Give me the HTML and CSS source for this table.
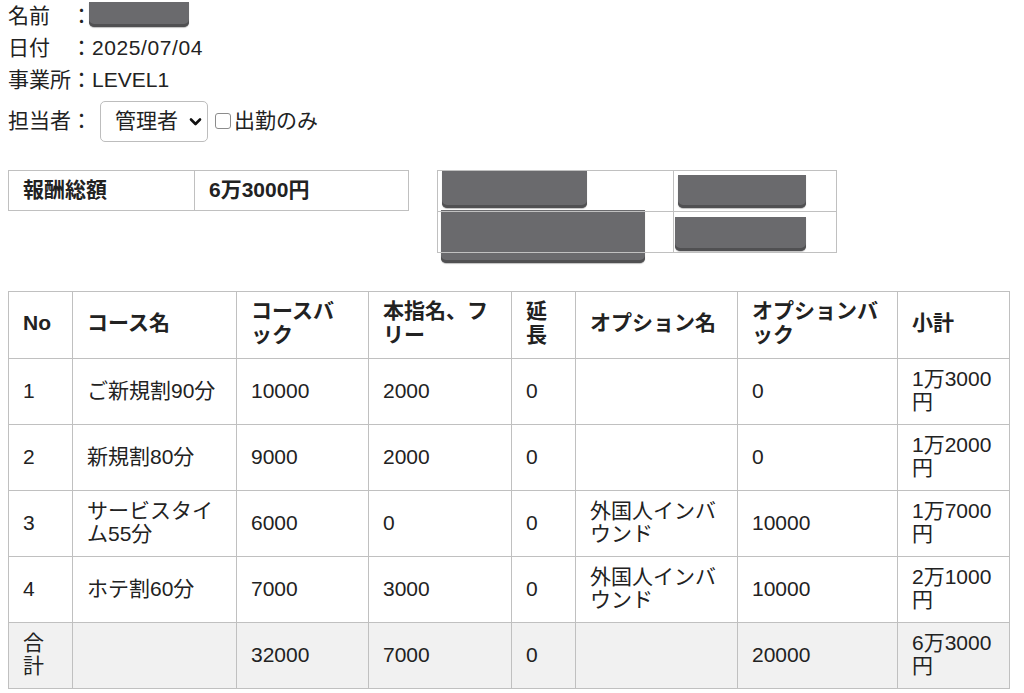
FILE: index.html
```html
<!DOCTYPE html>
<html lang="ja">
<head>
<meta charset="utf-8">
<title>報酬</title>
<link rel="stylesheet" href="styles.css">
</head>
<body>
<div class="info">
  <div class="line">名前　：<span class="redact redact-name"></span></div>
  <div class="line">日付　：<span class="num">2025/07/04</span></div>
  <div class="line">事業所：LEVEL1</div>
  <div class="line filter">
    <span>担当者：</span>
    <span class="select-wrap">
      <select class="select"><option>管理者</option></select>
      <svg class="chev" width="13" height="10" viewBox="0 0 13 10"><path d="M2 2.5 L6.5 7 L11 2.5" fill="none" stroke="#111" stroke-width="2.6" stroke-linecap="round" stroke-linejoin="round"/></svg>
    </span>
    <label class="check"><input type="checkbox" class="cb"><span>出勤のみ</span></label>
  </div>
</div>

<div class="summary-row">
  <table class="summary">
    <colgroup><col class="s1"><col class="s2"></colgroup>
    <tr><th>報酬総額</th><th>6万3000円</th></tr>
  </table>
  <table class="hidden-table">
    <colgroup><col class="h1"><col class="h2"></colgroup>
    <tr>
      <td><div class="redact r1"></div></td>
      <td><div class="redact r2"></div></td>
    </tr>
    <tr>
      <td><div class="redact r3"></div></td>
      <td><div class="redact r4"></div></td>
    </tr>
  </table>
</div>

<table class="main">
  <colgroup>
    <col class="c-no"><col class="c-course"><col class="c-back"><col class="c-shimei"><col class="c-ext"><col class="c-opt"><col class="c-optback"><col class="c-sub">
  </colgroup>
  <thead>
    <tr><th>No</th><th>コース名</th><th>コースバック</th><th>本指名、フリー</th><th>延長</th><th>オプション名</th><th>オプションバック</th><th>小計</th></tr>
  </thead>
  <tbody>
    <tr><td>1</td><td>ご新規割90分</td><td>10000</td><td>2000</td><td>0</td><td></td><td>0</td><td>1万3000円</td></tr>
    <tr><td>2</td><td>新規割80分</td><td>9000</td><td>2000</td><td>0</td><td></td><td>0</td><td>1万2000円</td></tr>
    <tr><td>3</td><td>サービスタイム55分</td><td>6000</td><td>0</td><td>0</td><td>外国人インバウンド</td><td>10000</td><td>1万7000円</td></tr>
    <tr><td>4</td><td>ホテ割60分</td><td>7000</td><td>3000</td><td>0</td><td>外国人インバウンド</td><td>10000</td><td>2万1000円</td></tr>
    <tr class="total"><td>合計</td><td></td><td>32000</td><td>7000</td><td>0</td><td></td><td>20000</td><td>6万3000円</td></tr>
  </tbody>
</table>
</body>
</html>
```
FILE: styles.css
```css
html, body {
  background: #fff;
}
body {
  margin: 0 8px;
  font-family: "Liberation Sans", "Noto Sans CJK JP", sans-serif;
  font-size: 21px;
  color: #222;
}
.info .line {
  height: 32px;
  line-height: 32px;
  white-space: nowrap;
}
.info .num {
  letter-spacing: 0.6px;
}
.info .filter {
  height: 50px;
  display: flex;
  align-items: center;
}
.redact {
  background: #6a6a6d;
  border-radius: 0 0 5px 5px;
  box-shadow: inset 0 -3px 0 #505052, 0 1px 1px rgba(0,0,0,0.25);
}
.redact-name {
  display: inline-block;
  width: 100px;
  height: 25px;
  vertical-align: top;
  margin-top: 2px;
  margin-left: -3px;
}
.select-wrap {
  position: relative;
  display: inline-block;
  margin-left: 8px;
}
.select {
  appearance: none;
  -webkit-appearance: none;
  width: 108px;
  height: 41px;
  border: 1px solid #bdbdbd;
  border-radius: 5px;
  background: #fff;
  font: inherit;
  color: #222;
  padding: 0 0 0 14px;
  display: block;
}
.chev {
  position: absolute;
  right: 6px;
  top: 16px;
  pointer-events: none;
}
.check {
  display: flex;
  align-items: center;
  margin-left: 7px;
}
.cb {
  appearance: none;
  -webkit-appearance: none;
  width: 16px;
  height: 16px;
  border: 1px solid #8c8c8c;
  border-radius: 3px;
  background: #fff;
  margin: 0 3px 0 0;
}
.summary-row {
  display: flex;
  align-items: flex-start;
  gap: 28px;
  margin-top: 24px;
}
table {
  border-collapse: collapse;
  table-layout: fixed;
}
.summary {
  width: 400px;
}
.s1 { width: 186px; }
.s2 { width: 214px; }
.summary th {
  border: 1px solid #c0c0c0;
  text-align: left;
  font-weight: bold;
  line-height: 24px;
  padding: 7px 14px 8px;
}
.hidden-table {
  width: 399px;
}
.h1 { width: 236px; }
.h2 { width: 163px; }
.hidden-table td {
  border: 1px solid #c0c0c0;
  height: 40px;
  padding: 0;
  vertical-align: top;
}
.r1 { width: 145px; height: 37px; margin: 0 0 0 4px; }
.r2 { width: 128px; height: 33px; margin: 4px 0 0 4px; }
.r3 { width: 204px; height: 53px; margin: -2px 0 -11px 3px; }
.r4 { width: 131px; height: 34px; margin: 5px 0 0 1px; }
.main {
  width: 1001px;
  margin-top: 38px;
}
.c-no { width: 64px; }
.c-course { width: 164px; }
.c-back { width: 132px; }
.c-shimei { width: 143px; }
.c-ext { width: 64px; }
.c-opt { width: 162px; }
.c-optback { width: 160px; }
.c-sub { width: 112px; }
.main th, .main td {
  border: 1px solid #c0c0c0;
  text-align: left;
  line-height: 23px;
  padding: 8px 14px 11px;
  height: 46px;
  vertical-align: middle;
  word-break: break-all;
}
.main th {
  font-weight: bold;
  line-height: 24px;
  padding: 7px 14px 11px;
  height: 48px;
}
.main .total td {
  background: #f1f1f1;
}
```
